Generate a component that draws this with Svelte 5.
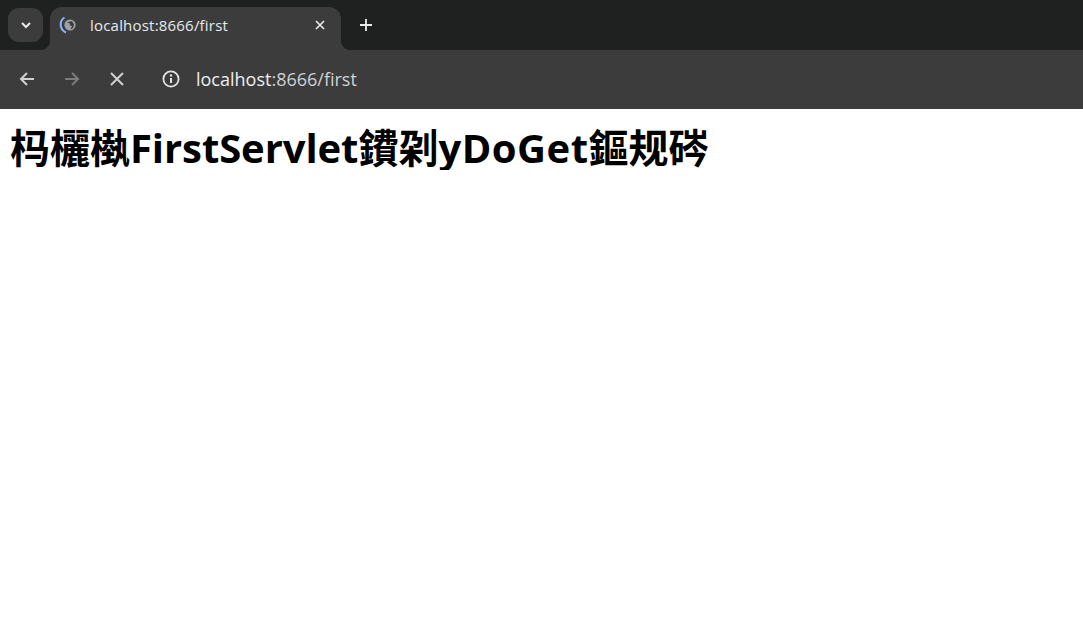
<script lang="ts">
  const url = "localhost:8666/first";
</script>

<div class="chrome">
  <div class="tabstrip">
    <button class="tab-search" aria-label="Search tabs">
      <svg width="12" height="12" viewBox="0 0 12 12"><path d="M2 4l4 4 4-4" fill="none" stroke="#e8eaed" stroke-width="2"/></svg>
    </button>
    <div class="tab">
      <svg class="favicon" width="18" height="18" viewBox="0 0 18 18">
        <path d="M5.5 1.5A8.5 8.5 0 0 0 7 16.5" fill="none" stroke="#8ab4f8" stroke-width="2"/>
        <circle cx="11" cy="9" r="5.6" fill="#a0a2a4"/>
        <path d="M7.5 6.5l3 .5.5 2.5 2 .5-1.5 3.5 2.5-1.5 1-3.5-2-3.5z" fill="#3c3c3c"/>
      </svg>
      <span class="tab-title">{url}</span>
      <svg class="tab-close" width="10" height="10" viewBox="0 0 10 10"><path d="M1 1l8 8M9 1l-8 8" stroke="#e8eaed" stroke-width="1.7"/></svg>
    </div>
    <svg class="new-tab" width="14" height="14" viewBox="0 0 14 14"><path d="M7 1v12M1 7h12" stroke="#e8eaed" stroke-width="1.8"/></svg>
  </div>
  <div class="toolbar">
    <svg class="nav" width="18" height="18" viewBox="0 0 18 18"><path d="M16 9H3M9 3L3 9l6 6" fill="none" stroke="#cfd0d1" stroke-width="2"/></svg>
    <svg class="nav" width="18" height="18" viewBox="0 0 18 18"><path d="M2 9h13M9 3l6 6-6 6" fill="none" stroke="#7b7c7c" stroke-width="2"/></svg>
    <svg class="nav" width="18" height="18" viewBox="0 0 18 18"><path d="M3 3l12 12M15 3L3 15" fill="none" stroke="#cfd0d1" stroke-width="2"/></svg>
    <div class="omnibox">
      <svg width="18" height="18" viewBox="0 0 18 18">
        <circle cx="9" cy="9" r="7.6" fill="none" stroke="#e3e3e3" stroke-width="1.8"/>
        <path d="M9 8v5" stroke="#e3e3e3" stroke-width="2"/>
        <circle cx="9" cy="5.4" r="1.2" fill="#e3e3e3"/>
      </svg>
      <span class="url"><span class="host">localhost</span>:8666/first</span>
    </div>
  </div>
</div>

<h1>杩欐槸<span class="latin-a">FirstServlet</span>鐨刴<span class="latin-b">yDoGet</span>鏂规硶</h1>

<style>
  :global(body) {
    margin: 0;
    background: #fff;
  }

  .chrome {
    font-family: "Open Sans", "Liberation Sans", sans-serif;
  }

  .tabstrip {
    height: 50px;
    background: #1f2020;
    display: flex;
    align-items: flex-start;
    padding-left: 8px;
  }

  .tab-search {
    width: 35px;
    height: 34px;
    margin-top: 8px;
    padding: 0;
    border: none;
    border-radius: 11px;
    background: #3c3c3c;
    display: flex;
    align-items: center;
    justify-content: center;
  }

  .tab {
    position: relative;
    width: 291px;
    height: 43px;
    margin-top: 7px;
    margin-left: 7px;
    background: #3c3c3c;
    border-radius: 12px 12px 0 0;
    display: flex;
    align-items: center;
    box-sizing: border-box;
    padding: 0 16px 7px 9px;
    color: #e8eaed;
  }

  .tab::before,
  .tab::after {
    content: "";
    position: absolute;
    bottom: 0;
    width: 10px;
    height: 10px;
  }

  .tab::before {
    left: -10px;
    background: radial-gradient(circle at 0 0, transparent 10px, #3c3c3c 10.5px);
  }

  .tab::after {
    right: -10px;
    background: radial-gradient(circle at 100% 0, transparent 10px, #3c3c3c 10.5px);
  }

  .favicon {
    flex-shrink: 0;
  }

  .tab-title {
    flex: 1;
    margin-left: 13px;
    font-size: 15px;
    line-height: 20px;
    letter-spacing: 0.2px;
    white-space: nowrap;
  }

  .new-tab {
    margin: 18px 0 0 18px;
  }

  .toolbar {
    height: 59px;
    box-sizing: border-box;
    padding: 0 0 1px 18px;
    background: #3c3c3c;
    display: flex;
    align-items: center;
    gap: 27px;
  }

  .nav {
    flex-shrink: 0;
  }

  .omnibox {
    display: flex;
    align-items: center;
    gap: 16px;
    margin-left: 9px;
    font-size: 18px;
    line-height: 24px;
    color: #d0d2d4;
  }

  .host {
    color: #eceef0;
  }

  h1 {
    margin: 0;
    padding: 17px 0 0 10px;
    font-family: "Open Sans", "Noto Sans CJK SC", sans-serif;
    font-size: 40px;
    font-weight: 700;
    line-height: 1.1;
    color: #000;
  }

  .latin-a {
    letter-spacing: -0.08px;
  }

  .latin-b {
    letter-spacing: 0.5px;
  }
</style>
